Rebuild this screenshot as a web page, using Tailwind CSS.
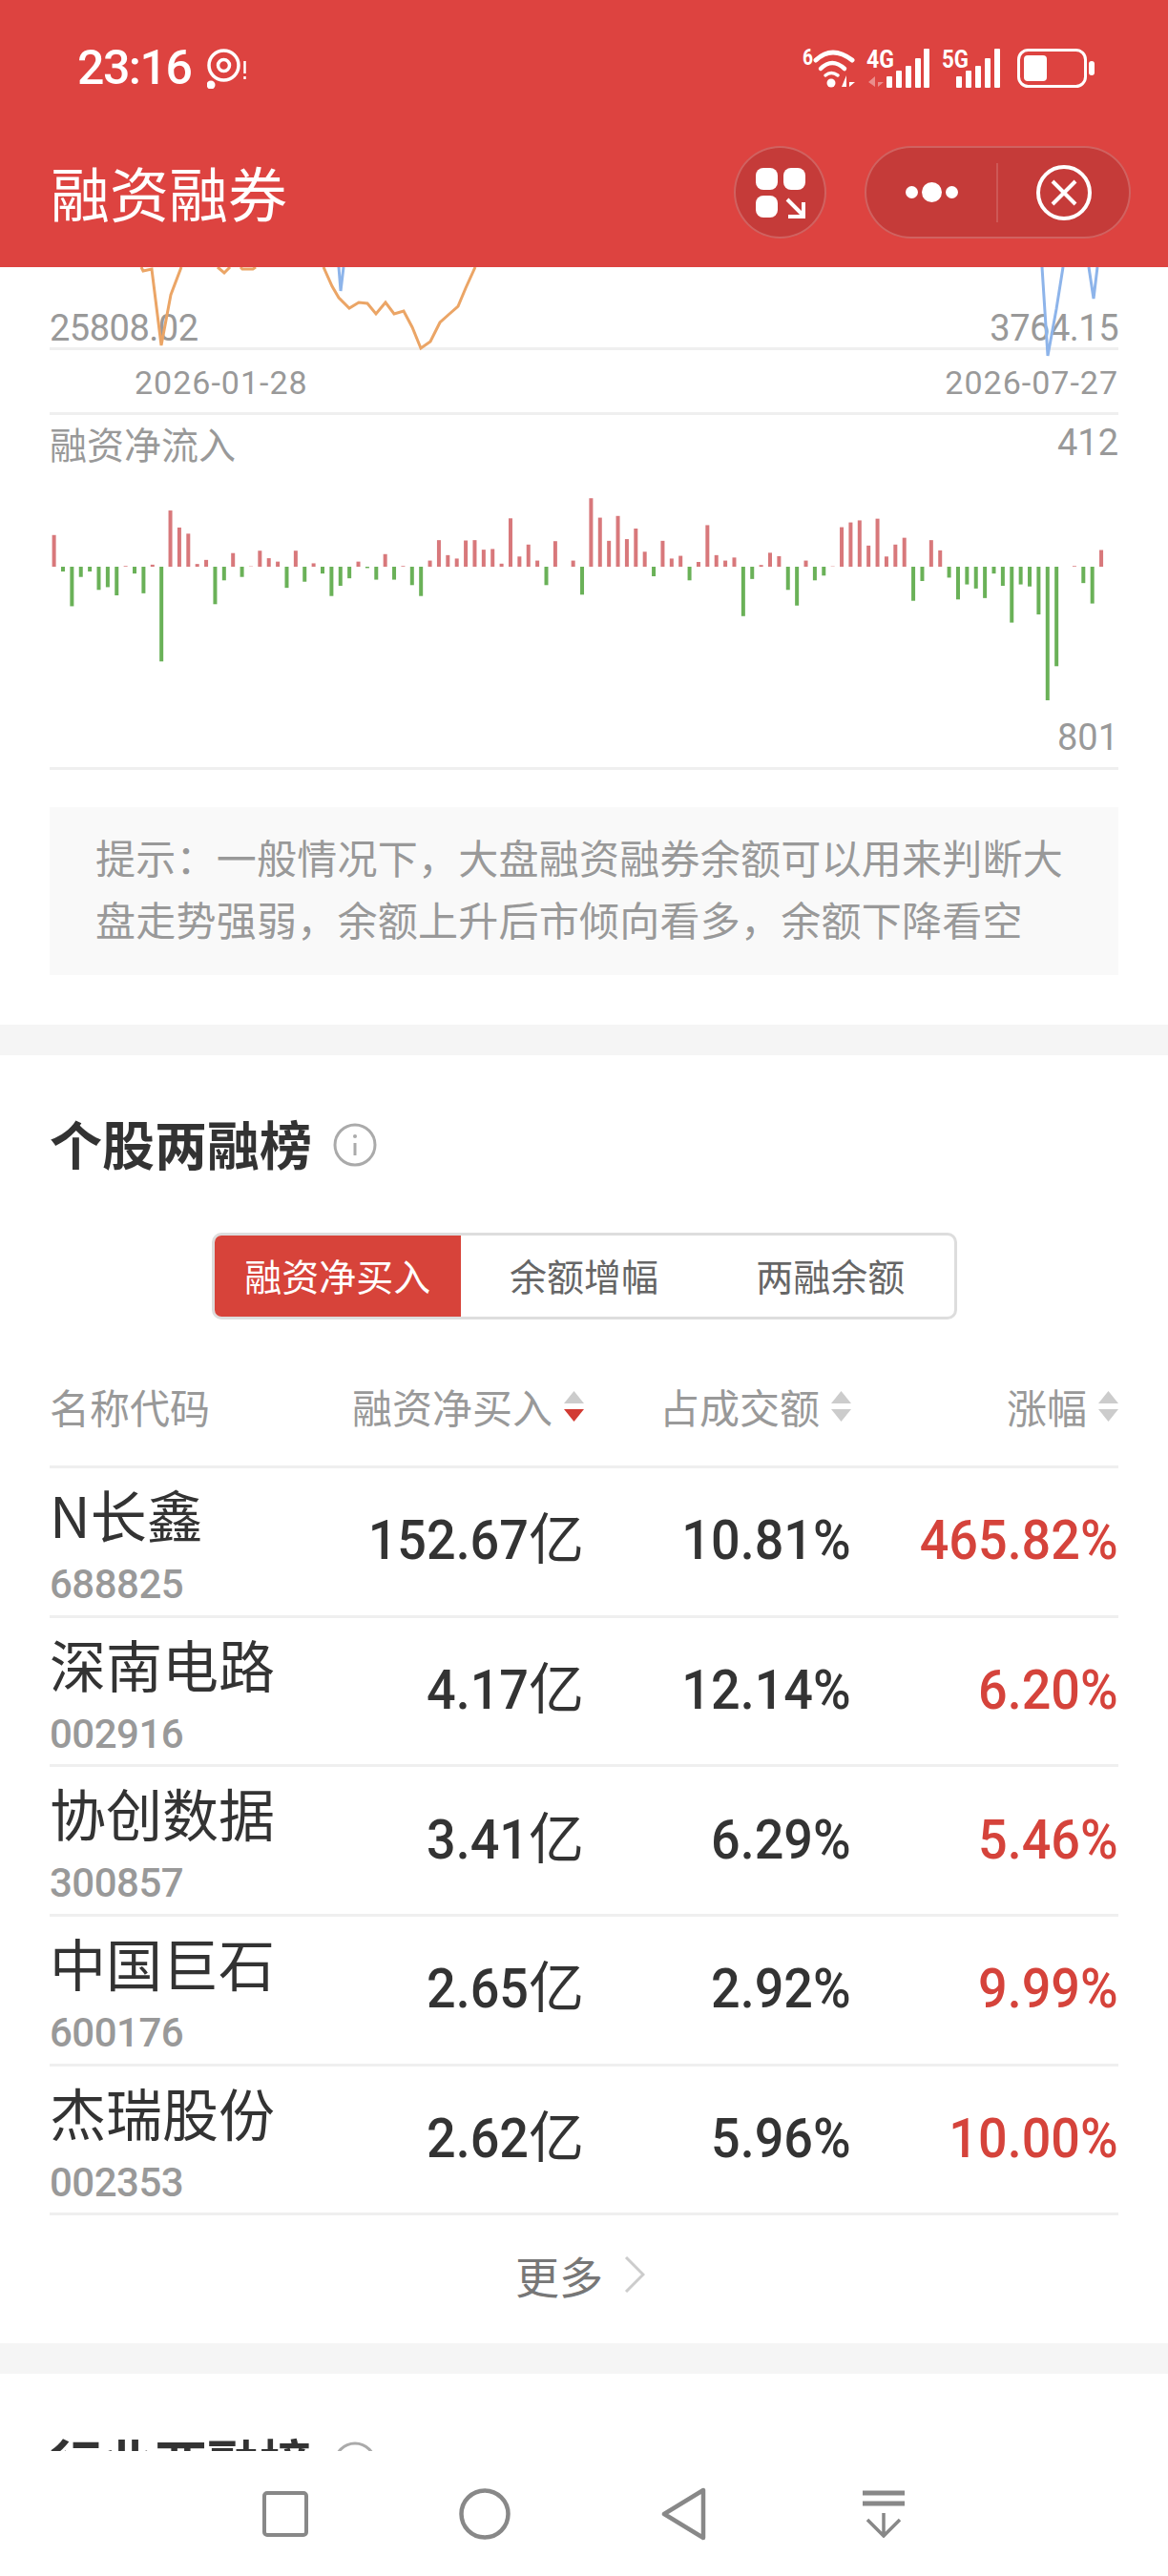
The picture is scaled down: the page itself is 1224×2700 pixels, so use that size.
<!DOCTYPE html>
<html lang="zh-CN">
<head>
  <meta charset="UTF-8" />
  <meta name="viewport" content="width=device-width, initial-scale=1.0"/>
  <title>融资融券</title>
  <script src="https://cdn.jsdelivr.net/npm/@tailwindcss/browser@4"></script>
</head>
<body class="bg-white font-['Noto_Sans_CJK_SC',sans-serif] text-[#333]">
  <div class="w-[1224px] h-[2700px] flex flex-col overflow-hidden">

    <!-- top bar -->
    <header class="h-[280px] shrink-0 bg-[#dd4340] text-white">
      <div class="h-[142px] flex items-center justify-between pl-[81px] pr-[76px]">
        <div class="flex items-center">
          <span class="font-['Roboto',sans-serif] font-medium text-[50px] tracking-[-1.5px] leading-none">23:16</span>
          <svg class="ml-[17px]" width="42" height="44" viewBox="217 47 42 44" fill="none" stroke="white">
            <circle cx="234.5" cy="66.5" r="15.5" stroke-width="3.5"/>
            <circle cx="234.5" cy="66.5" r="6" stroke-width="3.5"/>
            <circle cx="221" cy="87" r="4.5" fill="white" stroke="none"/>
            <path d="M256.5 62v13M256.5 78v3" stroke-width="2.5"/>
          </svg>
        </div>
        <svg width="308" height="50" viewBox="840 45 308 50" fill="white">
          <text x="841" y="67" font-family="Roboto" font-weight="700" font-size="24" textLength="11" lengthAdjust="spacingAndGlyphs">6</text>
          <g fill="none" stroke="white" stroke-linecap="round">
            <path d="M855 62Q872 46 893 62" stroke-width="5"/>
            <path d="M860 71Q872 59 885 71" stroke-width="4.5"/>
            <path d="M865 78Q871 73 878 78" stroke-width="3.5"/>
          </g>
          <circle cx="871" cy="86" r="4.5"/>
          <path d="M887 78v12h-5zM890 78v12l6-5h-6z"/>
          <text x="908" y="70" font-family="Roboto" font-weight="700" font-size="25" textLength="29" lengthAdjust="spacingAndGlyphs">4G</text>
          <path d="M917 79v11l-7-5zM920 79v11l6-5h-6z" opacity="0.4"/>
          <rect x="929" y="79" width="6" height="12" rx="1"/>
          <rect x="939" y="73" width="6" height="18" rx="1"/>
          <rect x="949" y="68" width="6" height="23" rx="1"/>
          <rect x="959" y="60" width="6" height="31" rx="1"/>
          <rect x="968" y="50" width="6" height="41" rx="1"/>
          <text x="987" y="70" font-family="Roboto" font-weight="700" font-size="25" textLength="28" lengthAdjust="spacingAndGlyphs">5G</text>
          <rect x="1002" y="79" width="6" height="12" rx="1"/>
          <rect x="1012" y="73" width="6" height="18" rx="1"/>
          <rect x="1022" y="68" width="6" height="23" rx="1"/>
          <rect x="1032" y="60" width="6" height="31" rx="1"/>
          <rect x="1042" y="50" width="6" height="41" rx="1"/>
          <rect x="1067.5" y="51.5" width="70" height="38" rx="10" fill="none" stroke="white" stroke-width="3"/>
          <rect x="1073" y="57" width="24" height="27" rx="4"/>
          <rect x="1141" y="63" width="6" height="15" rx="3"/>
        </svg>
      </div>
      <div class="flex items-start justify-between pt-[11px] pl-[53px] pr-[39px]">
        <h1 class="text-[62px] leading-[97px] font-normal">融资融券</h1>
        <div class="flex items-center gap-[40px]">
          <button class="w-[97px] h-[97px] rounded-full bg-[#c53b39] border-2 border-white/20 flex items-center justify-center">
            <svg width="54" height="54" viewBox="790 175 54 54" fill="white">
              <rect x="791" y="176" width="23" height="23" rx="8"/>
              <rect x="820" y="176" width="23" height="23" rx="8"/>
              <rect x="791" y="205" width="23" height="23" rx="8"/>
              <path d="M824 209L840 225M841 212v15h-16" fill="none" stroke="white" stroke-width="4"/>
            </svg>
          </button>
          <div class="w-[279px] h-[97px] rounded-full bg-[#c53b39] border-2 border-white/20 flex items-center">
            <div class="w-[136px] flex items-center justify-center gap-[4px]">
              <span class="w-[13px] h-[13px] rounded-full bg-white"></span>
              <span class="w-[21px] h-[21px] rounded-full bg-white"></span>
              <span class="w-[13px] h-[13px] rounded-full bg-white"></span>
            </div>
            <div class="w-[2px] h-[62px] bg-white/15"></div>
            <div class="flex-1 flex items-center justify-center">
              <svg width="58" height="58" viewBox="0 0 58 58" fill="none" stroke="white" stroke-width="4">
                <circle cx="29" cy="29" r="27"/>
                <path d="M17 17L41 41M41 17L17 41"/>
              </svg>
            </div>
          </div>
        </div>
      </div>
    </header>

    <!-- scrolling content, cut off at the system nav -->
    <main class="h-[2289px] shrink-0 overflow-hidden">
      <section class="relative px-[52px] pb-[52px]">
        <div class="h-[87px] border-b-[3px] border-[#efefef] flex justify-between items-end font-['Roboto',sans-serif] text-[38px] leading-[39px] text-[#999]">
          <span class="tracking-[-0.5px]">25808.02</span>
          <span class="tracking-[-0.5px]">3764.15</span>
        </div>
        <div class="h-[68px] border-b-[3px] border-[#efefef] flex justify-between items-center pl-[89px] pt-[4px] font-['Roboto',sans-serif] text-[34px] tracking-[1px] text-[#999]">
          <span>2026-01-28</span>
          <span>2026-07-27</span>
        </div>
        <div class="h-[372px] border-b-[3px] border-[#efefef] flex flex-col justify-between pt-[6px] pb-[8px] text-[39px] leading-[46px] text-[#999]">
          <div class="flex justify-between items-start">
            <span>融资净流入</span>
            <span class="font-['Roboto',sans-serif] text-[38px]">412</span>
          </div>
          <div class="text-right font-['Roboto',sans-serif] text-[38px]">801</div>
        </div>
        <div class="mt-[39px] h-[176px] bg-[#f9f9f9] pl-[48px] pt-[19px] text-[42px] tracking-[0.25px] leading-[65px] text-[#999]">
          提示：一般情况下，大盘融资融券余额可以用来判断大<br>盘走势强弱，余额上升后市倾向看多，余额下降看空
        </div>

        <svg id="flow-chart" class="absolute top-0 left-0" width="1224" height="530" viewBox="0 280 1224 530" fill="none">
          <g stroke="#eba566" stroke-width="3">
            <polyline points="148,280 150,284 159,282 169,362 179,309 190,280"/>
            <polyline points="228,280 235,286 241,280"/>
            <polyline points="252,280 254,282 265,282 268,280"/>
            <polyline points="339,280 348,300 355,312 366,323 376,317 385,318 394,329 404,317 413,329 423,326 432,343 441,365 451,358 461,338 471,329 480,321 488,302 498,280"/>
          </g>
          <g stroke="#8db4ea" stroke-width="3">
            <polyline points="355,280 357,305 360,280"/>
            <polyline points="1092,280 1098,373 1107,324 1114,280"/>
            <polyline points="1141,280 1146,313 1150,280"/>
          </g>
        </svg>
      </section>

      <div class="h-[32px] bg-[#f5f5f5]"></div>

      <section class="px-[52px]">
        <div class="pt-[52px] h-[130px] flex items-center gap-[22px]">
          <h2 class="text-[55px] leading-[78px] font-bold">个股两融榜</h2>
          <svg class="mt-[6px]" width="46" height="46" viewBox="0 0 46 46" fill="none" stroke="#aaa" stroke-width="3">
            <circle cx="23" cy="23" r="21"/>
            <path d="M23 21v13" stroke-width="3"/>
            <circle cx="23" cy="14" r="2" fill="#aaa" stroke="none"/>
          </svg>
        </div>

        <div class="mt-[56px] mx-auto w-[781px] h-[91px] border-[3px] border-[#ddd] rounded-[10px] overflow-hidden flex text-[39px]">
          <div class="flex-1 flex items-center justify-center bg-[#d7433a] text-white pb-[3px]">融资净买入</div>
          <div class="flex-1 flex items-center justify-center text-[#666] pb-[3px]">余额增幅</div>
          <div class="flex-1 flex items-center justify-center text-[#666] pb-[3px]">两融余额</div>
        </div>

        <div class="mt-[28px] h-[128px] border-b-[3px] border-[#efefef] grid grid-cols-[300px_260px_280px_280px] items-center text-[42px] text-[#999]">
          <div>名称代码</div>
          <div class="flex items-center justify-end gap-[12px]">
            融资净买入
            <svg width="21" height="32" viewBox="0 0 21 32"><path d="M10.5 0L21 13H0z" fill="#ccc"/><path d="M10.5 32L0 19h21z" fill="#d23b33"/></svg>
          </div>
          <div class="flex items-center justify-end gap-[12px]">
            占成交额
            <svg width="21" height="32" viewBox="0 0 21 32"><path d="M10.5 0L21 13H0z" fill="#ccc"/><path d="M10.5 32L0 19h21z" fill="#ccc"/></svg>
          </div>
          <div class="flex items-center justify-end gap-[12px]">
            涨幅
            <svg width="21" height="32" viewBox="0 0 21 32"><path d="M10.5 0L21 13H0z" fill="#ccc"/><path d="M10.5 32L0 19h21z" fill="#ccc"/></svg>
          </div>
        </div>

        <div class="h-[156.7px] border-b-[3px] border-[#efefef] grid grid-cols-[300px_260px_280px_280px] items-center font-['Roboto','Noto_Sans_CJK_SC',sans-serif] font-medium text-[58px] text-right">
          <div class="text-left pt-[4px] font-normal font-['Noto_Sans_CJK_SC',sans-serif]">
            <div class="text-[59px] leading-[70px]">N长鑫</div>
            <div class="mt-[16px] font-['Roboto',sans-serif] font-medium text-[42px] leading-[46px] tracking-[-0.5px] text-[#999]">688825</div>
          </div>
          <div class="pb-[2px]"><span class="inline-block origin-right scale-x-[0.93]">152.67</span><span class="font-normal">亿</span></div>
          <div class="pb-[2px]"><span class="inline-block origin-right scale-x-[0.93]">10.81%</span></div>
          <div class="pb-[2px] text-[#d5433b]"><span class="inline-block origin-right scale-x-[0.93]">465.82%</span></div>
        </div>
        <div class="h-[156.7px] border-b-[3px] border-[#efefef] grid grid-cols-[300px_260px_280px_280px] items-center font-['Roboto','Noto_Sans_CJK_SC',sans-serif] font-medium text-[58px] text-right">
          <div class="text-left pt-[4px] font-normal font-['Noto_Sans_CJK_SC',sans-serif]">
            <div class="text-[59px] leading-[70px]">深南电路</div>
            <div class="mt-[16px] font-['Roboto',sans-serif] font-medium text-[42px] leading-[46px] tracking-[-0.5px] text-[#999]">002916</div>
          </div>
          <div class="pb-[2px]"><span class="inline-block origin-right scale-x-[0.93]">4.17</span><span class="font-normal">亿</span></div>
          <div class="pb-[2px]"><span class="inline-block origin-right scale-x-[0.93]">12.14%</span></div>
          <div class="pb-[2px] text-[#d5433b]"><span class="inline-block origin-right scale-x-[0.93]">6.20%</span></div>
        </div>
        <div class="h-[156.7px] border-b-[3px] border-[#efefef] grid grid-cols-[300px_260px_280px_280px] items-center font-['Roboto','Noto_Sans_CJK_SC',sans-serif] font-medium text-[58px] text-right">
          <div class="text-left pt-[4px] font-normal font-['Noto_Sans_CJK_SC',sans-serif]">
            <div class="text-[59px] leading-[70px]">协创数据</div>
            <div class="mt-[16px] font-['Roboto',sans-serif] font-medium text-[42px] leading-[46px] tracking-[-0.5px] text-[#999]">300857</div>
          </div>
          <div class="pb-[2px]"><span class="inline-block origin-right scale-x-[0.93]">3.41</span><span class="font-normal">亿</span></div>
          <div class="pb-[2px]"><span class="inline-block origin-right scale-x-[0.93]">6.29%</span></div>
          <div class="pb-[2px] text-[#d5433b]"><span class="inline-block origin-right scale-x-[0.93]">5.46%</span></div>
        </div>
        <div class="h-[156.7px] border-b-[3px] border-[#efefef] grid grid-cols-[300px_260px_280px_280px] items-center font-['Roboto','Noto_Sans_CJK_SC',sans-serif] font-medium text-[58px] text-right">
          <div class="text-left pt-[4px] font-normal font-['Noto_Sans_CJK_SC',sans-serif]">
            <div class="text-[59px] leading-[70px]">中国巨石</div>
            <div class="mt-[16px] font-['Roboto',sans-serif] font-medium text-[42px] leading-[46px] tracking-[-0.5px] text-[#999]">600176</div>
          </div>
          <div class="pb-[2px]"><span class="inline-block origin-right scale-x-[0.93]">2.65</span><span class="font-normal">亿</span></div>
          <div class="pb-[2px]"><span class="inline-block origin-right scale-x-[0.93]">2.92%</span></div>
          <div class="pb-[2px] text-[#d5433b]"><span class="inline-block origin-right scale-x-[0.93]">9.99%</span></div>
        </div>
        <div class="h-[156.7px] border-b-[3px] border-[#efefef] grid grid-cols-[300px_260px_280px_280px] items-center font-['Roboto','Noto_Sans_CJK_SC',sans-serif] font-medium text-[58px] text-right">
          <div class="text-left pt-[4px] font-normal font-['Noto_Sans_CJK_SC',sans-serif]">
            <div class="text-[59px] leading-[70px]">杰瑞股份</div>
            <div class="mt-[16px] font-['Roboto',sans-serif] font-medium text-[42px] leading-[46px] tracking-[-0.5px] text-[#999]">002353</div>
          </div>
          <div class="pb-[2px]"><span class="inline-block origin-right scale-x-[0.93]">2.62</span><span class="font-normal">亿</span></div>
          <div class="pb-[2px]"><span class="inline-block origin-right scale-x-[0.93]">5.96%</span></div>
          <div class="pb-[2px] text-[#d5433b]"><span class="inline-block origin-right scale-x-[0.93]">10.00%</span></div>
        </div>

        <div class="h-[134px] pb-[10px] pr-[8px] flex items-center justify-center gap-[22px] text-[46px] text-[#777]">
          更多
          <svg width="22" height="38" viewBox="0 0 22 38" fill="none" stroke="#ccc" stroke-width="3"><path d="M2 1L20 19L2 37"/></svg>
        </div>
      </section>

      <div class="h-[32px] bg-[#f5f5f5]"></div>

      <section class="px-[52px]">
        <div class="pt-[52px] h-[130px] flex items-center gap-[22px]">
          <h2 class="text-[55px] leading-[78px] font-bold">行业两融榜</h2>
          <svg class="mt-[6px]" width="46" height="46" viewBox="0 0 46 46" fill="none" stroke="#aaa" stroke-width="3">
            <circle cx="23" cy="23" r="21"/>
            <path d="M23 21v13" stroke-width="3"/>
            <circle cx="23" cy="14" r="2" fill="#aaa" stroke="none"/>
          </svg>
        </div>
      </section>
    </main>

    <!-- system nav -->
    <nav class="h-[131px] shrink-0 bg-white flex items-center justify-center">
      <div class="w-[209px] flex justify-center">
        <svg width="50" height="50" viewBox="0 0 50 50" fill="none" stroke="#888" stroke-width="4"><rect x="3" y="3" width="44" height="44" rx="3"/></svg>
      </div>
      <div class="w-[209px] flex justify-center">
        <svg width="54" height="54" viewBox="0 0 54 54" fill="none" stroke="#888" stroke-width="4.5"><circle cx="27" cy="27" r="24.5"/></svg>
      </div>
      <div class="w-[209px] flex justify-center">
        <svg width="48" height="56" viewBox="0 0 48 56" fill="none" stroke="#888" stroke-width="4.5" stroke-linejoin="round"><path d="M44 3V53L3 28Z"/></svg>
      </div>
      <div class="w-[209px] flex justify-center">
        <svg width="46" height="50" viewBox="0 0 46 50" fill="none" stroke="#888">
          <path d="M1 3H45M1 14H45" stroke-width="5"/>
          <path d="M23 24V48M6 31L23 48L40 31" stroke-width="3.5"/>
        </svg>
      </div>
    </nav>
  </div>

  <script>
    // net flow per trading day, measured off the chart (positive = up from the zero line)
    const flow = [93,-14,-116,-30,-14,-68,-60,-84,2,-20,-78,6,-278,165,115,97,8,20,-110,-40,40,-30,1,47,25,15,-62,47,-44,10,-20,-86,-56,-34,15,-4,-38,37,-38,2,-54,-86,18,78,34,24,77,78,50,52,9,142,30,65,18,-54,75,0,18,-82,
      201,144,76,149,81,112,44,-28,76,24,32,-40,14,122,34,18,27,-145,-36,5,41,31,-68,-114,18,-40,-26,1,116,130,136,62,141,30,65,85,-100,-42,78,48,-32,-96,-52,-64,-92,-20,-56,-164,-52,-58,-140,-392,-292,0,2,-48,-108,49];

    const chart = document.getElementById('flow-chart');
    flow.forEach((value, i) => {
      if (value === 0) return;
      const height = Math.abs(value) / 2.8;
      const rect = document.createElementNS('http://www.w3.org/2000/svg', 'rect');
      rect.setAttribute('x', 54.6 + i * 9.38);
      rect.setAttribute('y', value > 0 ? 594 - height : 594);
      rect.setAttribute('width', 4);
      rect.setAttribute('height', height);
      rect.setAttribute('fill', value > 0 ? '#d8787b' : '#6ab158');
      chart.appendChild(rect);
    });
  </script>
</body>
</html>
